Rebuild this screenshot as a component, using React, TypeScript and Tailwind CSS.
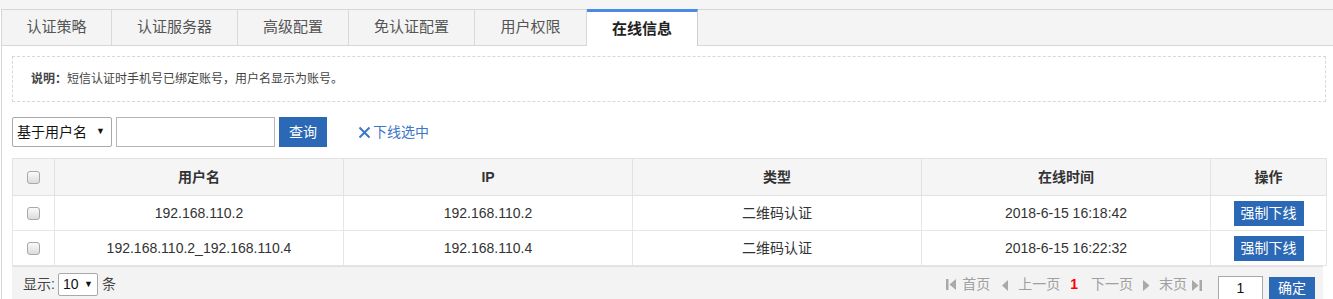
const font = { fontFamily: '"Liberation Sans", "Noto Sans CJK SC", sans-serif' };

const tabs = ['认证策略', '认证服务器', '高级配置', '免认证配置', '用户权限', '在线信息'];
const tabWidths = ['w-[110px]', 'w-[126px]', 'w-[111px]', 'w-[126px]', 'w-[112px]', 'w-[111px]'];

const rows = [
  { user: '192.168.110.2', ip: '192.168.110.2', type: '二维码认证', time: '2018-6-15 16:18:42' },
  { user: '192.168.110.2_192.168.110.4', ip: '192.168.110.4', type: '二维码认证', time: '2018-6-15 16:22:32' },
];

function Checkbox() {
  return (
    <span className="inline-block w-[13px] h-[13px] rounded-[3px] border border-[#a8a8a8] bg-gradient-to-b from-[#fafafa] to-[#dcdcdc] align-middle" />
  );
}

function Tri({ dir, bar }: { dir: 'l' | 'r'; bar?: boolean }) {
  return (
    <svg width={bar ? 10 : 6} height="11" viewBox={bar ? '0 0 10 11' : '0 0 6 11'} className="inline-block">
      {dir === 'l' ? (
        <>
          {bar && <rect x="0" y="0" width="2.5" height="11" fill="#a9a9a9" />}
          <polygon points={bar ? '10,0 10,11 3.5,5.5' : '6,0 6,11 0,5.5'} fill="#a9a9a9" />
        </>
      ) : (
        <>
          <polygon points="0,0 0,11 6.5,5.5" fill="#a9a9a9" />
          {bar && <rect x="7.5" y="0" width="2.5" height="11" fill="#a9a9a9" />}
        </>
      )}
    </svg>
  );
}

export default function App() {
  return (
    <div className="w-[1333px] h-[299px] overflow-hidden bg-white text-[#333]" style={font}>
      {/* top strip */}
      <div className="h-[9px] bg-[#f5f5f5]" />

      {/* tabs */}
      <div className="h-[37px] flex bg-[#f4f4f4] border-t border-b border-[#d6d6d6] ml-[1px] border-l">
        {tabs.map((t, i) =>
          i === tabs.length - 1 ? (
            <div
              key={t}
              className={`${tabWidths[i]} h-[37px] -mt-[1px] flex items-center justify-center bg-white border-t-[3px] border-[#4a8ae6] border-r border-r-[#d0d0d0] text-[15px] font-bold text-[#222]`}
            >
              {t}
            </div>
          ) : (
            <div
              key={t}
              className={`${tabWidths[i]} h-full flex items-center justify-center border-r border-[#d9d9d9] text-[15px] text-[#555]`}
            >
              {t}
            </div>
          )
        )}
      </div>

      {/* content */}
      <div className="ml-[1px] border-l border-[#d6d6d6] pl-[10px] pr-[7px] pt-[10px]">
        <div className="h-[46px] border border-dashed border-[#d8d8d8] flex items-center pl-[18px] text-[12px] text-[#444]">
          <span className="font-bold">说明：</span>
          <span>短信认证时手机号已绑定账号，用户名显示为账号。</span>
        </div>

        {/* search row */}
        <div className="mt-[15px] h-[30px] flex items-center">
          <div className="w-[100px] h-[30px] border border-[#a9a9a9] rounded-[2px] flex items-center justify-between pl-[4px] pr-[6px] text-[14px] text-[#111]">
            <span>基于用户名</span>
            <span className="text-[9px]">▼</span>
          </div>
          <div className="ml-[4px] w-[159px] h-[30px] border border-[#b5b5b5]" />
          <button className="ml-[4px] w-[48px] h-[30px] bg-[#2b68b5] text-white text-[14px]">查询</button>
          <div className="ml-[31px] flex items-center text-[#3b77c9] text-[14px]">
            <svg width="13" height="13" viewBox="0 0 13 13" className="mr-[2px]">
              <path d="M1.5 1.5 L11.5 11.5 M11.5 1.5 L1.5 11.5" stroke="#3b77c9" strokeWidth="2" />
            </svg>
            <span>下线选中</span>
          </div>
        </div>

        {/* table */}
        <table className="mt-[11px] w-[1314px] border-collapse table-fixed text-[14px]">
          <colgroup>
            <col className="w-[42px]" />
            <col className="w-[289px]" />
            <col className="w-[289px]" />
            <col className="w-[289px]" />
            <col className="w-[289px]" />
            <col className="w-[116px]" />
          </colgroup>
          <thead>
            <tr className="h-[37px] bg-[#f5f5f5]">
              <th className="border border-[#e2e2e2] text-center">
                <Checkbox />
              </th>
              {['用户名', 'IP', '类型', '在线时间', '操作'].map((h) => (
                <th key={h} className="border border-[#e2e2e2] font-bold text-[#333] text-center">
                  {h}
                </th>
              ))}
            </tr>
          </thead>
          <tbody>
            {rows.map((r) => (
              <tr key={r.time} className="h-[35px]">
                <td className="border border-[#e6e6e6] text-center">
                  <Checkbox />
                </td>
                <td className="border border-[#e6e6e6] text-center text-[#333]">{r.user}</td>
                <td className="border border-[#e6e6e6] text-center text-[#333]">{r.ip}</td>
                <td className="border border-[#e6e6e6] text-center text-[#333]">{r.type}</td>
                <td className="border border-[#e6e6e6] text-center text-[#333]">{r.time}</td>
                <td className="border border-[#e6e6e6] text-center">
                  <button className="w-[70px] h-[25px] bg-[#2b68b5] text-white text-[14px]">强制下线</button>
                </td>
              </tr>
            ))}
          </tbody>
        </table>

        {/* footer */}
        <div className="w-[1311px] h-[36px] bg-[#f3f3f3] border-t border-[#e0e0e0] flex items-center pl-[11px] text-[14px]">
          <span className="text-[#444]">显示:</span>
          <div className="ml-[3px] w-[40px] h-[23px] border border-[#a9a9a9] rounded-[2px] bg-white flex items-center justify-between px-[4px] text-[14px] text-[#111]">
            <span>10</span>
            <span className="text-[9px]">▼</span>
          </div>
          <span className="ml-[4px] text-[#444]">条</span>

          <div className="ml-auto flex items-center text-[#a0a0a0] text-[14px]">
            <Tri dir="l" bar />
            <span className="ml-[6px]">首页</span>
            <span className="ml-[12px]"><Tri dir="l" /></span>
            <span className="ml-[10px]">上一页</span>
            <span className="ml-[10px] text-[#f00] font-bold">1</span>
            <span className="ml-[13px]">下一页</span>
            <span className="ml-[10px]"><Tri dir="r" /></span>
            <span className="ml-[10px]">末页</span>
            <span className="ml-[5px]"><Tri dir="r" bar /></span>
          </div>
          <div className="ml-[16px] w-[45px] h-[26px] mt-[8px] border border-[#a9a9a9] bg-white flex items-center justify-center text-[14px] text-[#111]">
            1
          </div>
          <button className="ml-[6px] mr-[8px] w-[46px] h-[24px] mt-[8px] bg-[#2b68b5] text-white text-[14px]">确定</button>
        </div>
      </div>
    </div>
  );
}
